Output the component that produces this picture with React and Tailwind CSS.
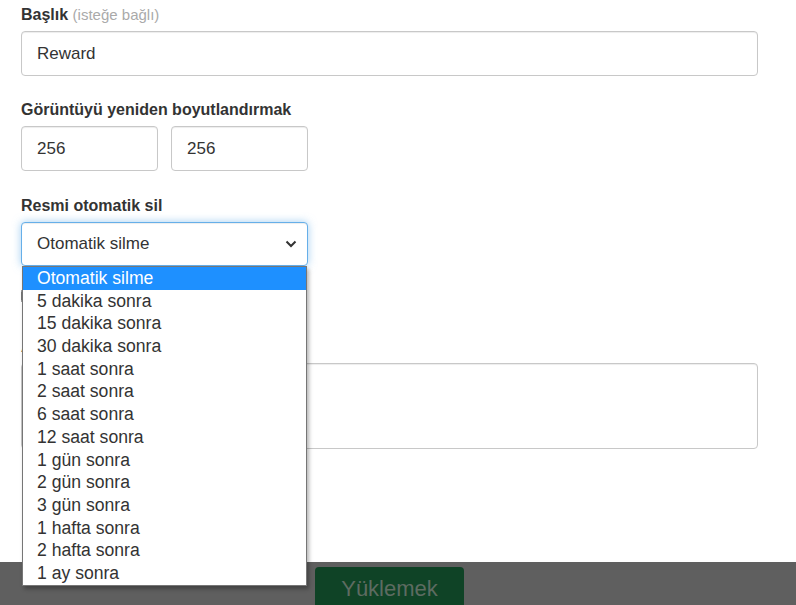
import { useState } from 'react';

const deleteOptions = [
  'Otomatik silme',
  '5 dakika sonra',
  '15 dakika sonra',
  '30 dakika sonra',
  '1 saat sonra',
  '2 saat sonra',
  '6 saat sonra',
  '12 saat sonra',
  '1 gün sonra',
  '2 gün sonra',
  '3 gün sonra',
  '1 hafta sonra',
  '2 hafta sonra',
  '1 ay sonra',
];

const inputClass =
  'h-[45px] rounded-[4px] border border-[#c8c8c8] bg-white px-[15px] text-[17px] text-[#333] shadow-[inset_0_1px_1px_rgba(0,0,0,0.075)] outline-none';

function Label({ children }) {
  return <label className="block h-[22px] leading-[22px] text-[16px] font-bold text-[#333]">{children}</label>;
}

export default function App() {
  const [title, setTitle] = useState('Reward');
  const [width, setWidth] = useState('256');
  const [height, setHeight] = useState('256');
  const [selected, setSelected] = useState(0);

  return (
    <div className="flex h-[605px] w-[796px] flex-col overflow-hidden bg-white font-['Liberation_Sans',Arial,sans-serif]">
      <div className="flex-1 px-[21px] pt-[4px]">
        <div className="w-[737px]">
          {/* Title */}
          <Label>
            Başlık <span className="text-[15px] font-normal text-[#aaa]">(isteğe bağlı)</span>
          </Label>
          <input
            value={title}
            onChange={(e) => setTitle(e.target.value)}
            className={`${inputClass} mt-[5px] w-full`}
          />

          {/* Resize */}
          <div className="mt-[23px]">
            <Label>Görüntüyü yeniden boyutlandırmak</Label>
            <div className="mt-[5px] flex gap-[13px]">
              <input value={width} onChange={(e) => setWidth(e.target.value)} className={`${inputClass} h-[44px] w-[137px]`} />
              <input value={height} onChange={(e) => setHeight(e.target.value)} className={`${inputClass} h-[44px] w-[137px]`} />
            </div>
          </div>

          {/* Auto delete */}
          <div className="mt-[24px]">
            <Label>Resmi otomatik sil</Label>
            <div className="relative mt-[5px] w-[287px]">
              <div className="flex h-[44px] items-center justify-between rounded-[4px] border border-[#66afe9] bg-white pl-[15px] pr-[10px] text-[17px] text-[#333] shadow-[inset_0_1px_1px_rgba(0,0,0,0.075),0_0_8px_rgba(102,175,233,0.6)]">
                <span>{deleteOptions[selected]}</span>
                <svg width="12" height="8" viewBox="0 0 12 8" fill="none" stroke="#333" strokeWidth="2">
                  <path d="M1.5 1.5 6 6l4.5-4.5" />
                </svg>
              </div>

              <ul className="absolute left-[1px] top-[44px] z-10 w-[285px] border border-[#767676] bg-white text-[17.6px] text-[#333] shadow-[2px_3px_4px_rgba(0,0,0,0.3)]">
                {deleteOptions.map((opt, i) => (
                  <li
                    key={opt}
                    onClick={() => setSelected(i)}
                    className={`h-[22.7px] pl-[14px] leading-[22.7px] ${i === selected ? 'bg-[#1e90ff] text-white' : ''}`}
                  >
                    {opt}
                  </li>
                ))}
              </ul>
            </div>
          </div>

          {/* Private toggle */}
          <div className="mt-[22px] flex h-[16px] items-center gap-[6px] text-[16px] text-[#333]">
            <input type="checkbox" className="h-[14px] w-[14px]" />
            <span>Gizli</span>
          </div>

          {/* Description */}
          <div className="mt-[32px]">
            <Label>Açıklama</Label>
            <textarea className={`${inputClass} mt-[5px] block h-[86px] w-full resize-none`} />
          </div>
        </div>
      </div>

      <footer className="h-[43px] bg-[#5f5f5f] pl-[315px] pt-[5px]">
        <button className="h-[48px] w-[149px] rounded-[4px] bg-[#0f4326] pb-[6px] text-[22px] text-[#5d6b61]">
          Yüklemek
        </button>
      </footer>
    </div>
  );
}
